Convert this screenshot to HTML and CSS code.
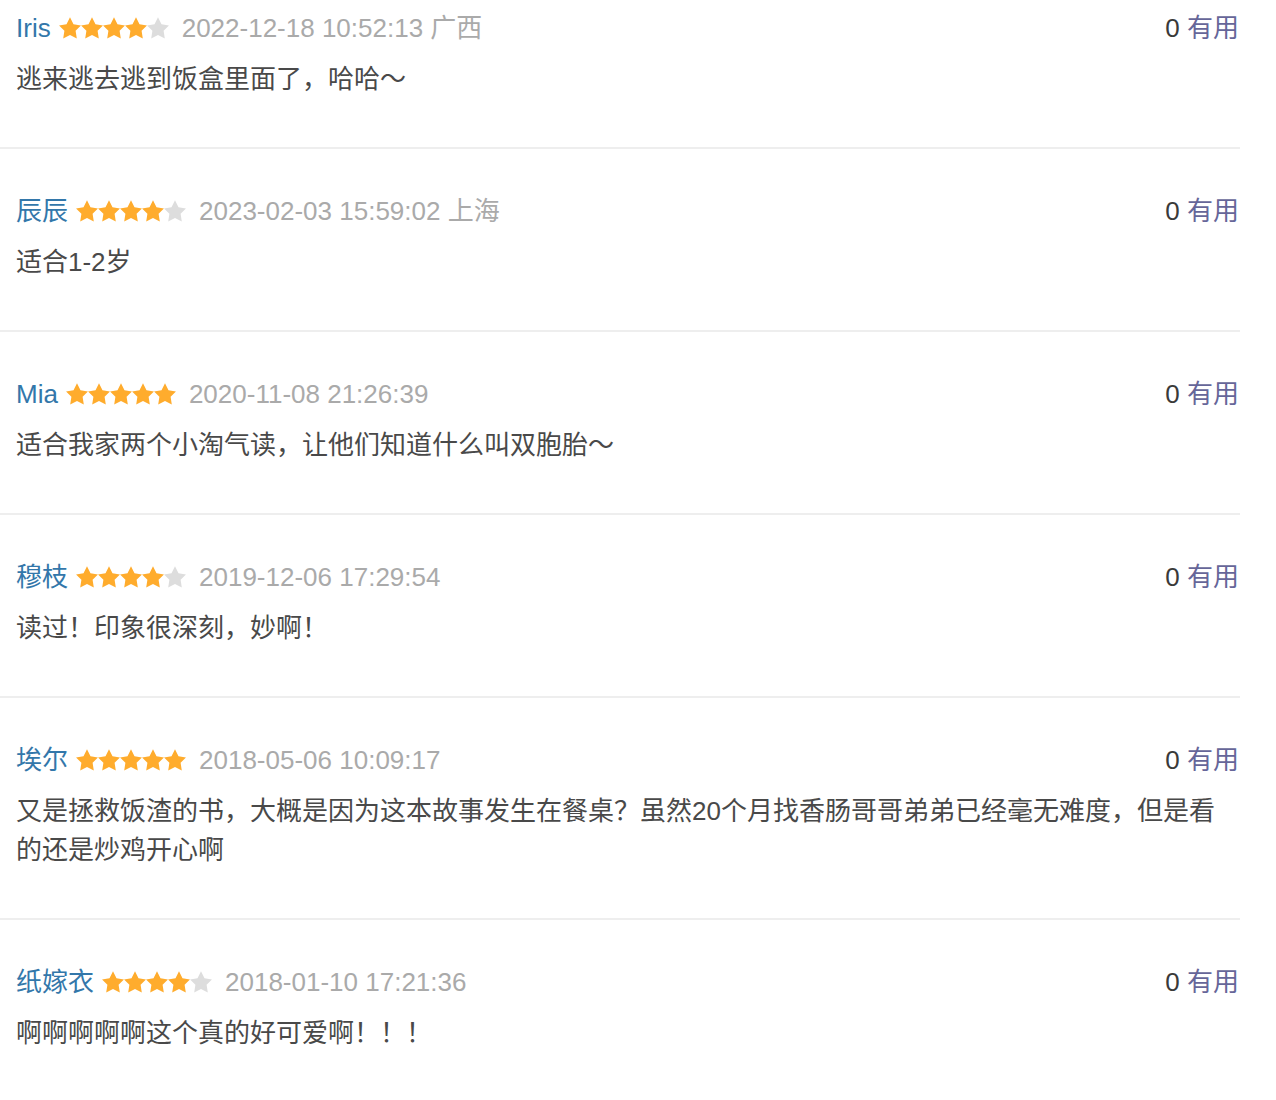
FILE: index.html
```html
<!DOCTYPE html>
<html lang="zh-CN">
<head>
<meta charset="utf-8">
<title>短评</title>
<link rel="stylesheet" href="styles.css">
</head>
<body>
<svg class="defs" width="0" height="0" aria-hidden="true">
  <defs>
    <polygon id="star" points="11,0.3 14.5,7.3 21.95,8.4 16.6,13.8 17.8,21.4 11,17.9 4.2,21.4 5.4,13.8 0.05,8.4 7.5,7.3"/>
  </defs>
</svg>
<ul class="comments">
  <li class="item">
    <div class="head">
      <div class="info">
        <a class="name" href="#">Iris</a>
        <svg class="stars" width="110" height="22" viewBox="0 0 110 22"><use href="#star" x="0" class="on"/><use href="#star" x="22" class="on"/><use href="#star" x="44" class="on"/><use href="#star" x="66" class="on"/><use href="#star" x="88" class="off"/></svg>
        <span class="time">2022-12-18 10:52:13 广西</span>
      </div>
      <div class="vote"><span class="count">0</span> <a class="useful" href="#">有用</a></div>
    </div>
    <p class="text">逃来逃去逃到饭盒里面了，哈哈～</p>
  </li>
  <li class="item">
    <div class="head">
      <div class="info">
        <a class="name" href="#">辰辰</a>
        <svg class="stars" width="110" height="22" viewBox="0 0 110 22"><use href="#star" x="0" class="on"/><use href="#star" x="22" class="on"/><use href="#star" x="44" class="on"/><use href="#star" x="66" class="on"/><use href="#star" x="88" class="off"/></svg>
        <span class="time">2023-02-03 15:59:02 上海</span>
      </div>
      <div class="vote"><span class="count">0</span> <a class="useful" href="#">有用</a></div>
    </div>
    <p class="text">适合1-2岁</p>
  </li>
  <li class="item">
    <div class="head">
      <div class="info">
        <a class="name" href="#">Mia</a>
        <svg class="stars" width="110" height="22" viewBox="0 0 110 22"><use href="#star" x="0" class="on"/><use href="#star" x="22" class="on"/><use href="#star" x="44" class="on"/><use href="#star" x="66" class="on"/><use href="#star" x="88" class="on"/></svg>
        <span class="time">2020-11-08 21:26:39</span>
      </div>
      <div class="vote"><span class="count">0</span> <a class="useful" href="#">有用</a></div>
    </div>
    <p class="text">适合我家两个小淘气读，让他们知道什么叫双胞胎～</p>
  </li>
  <li class="item">
    <div class="head">
      <div class="info">
        <a class="name" href="#">穆枝</a>
        <svg class="stars" width="110" height="22" viewBox="0 0 110 22"><use href="#star" x="0" class="on"/><use href="#star" x="22" class="on"/><use href="#star" x="44" class="on"/><use href="#star" x="66" class="on"/><use href="#star" x="88" class="off"/></svg>
        <span class="time">2019-12-06 17:29:54</span>
      </div>
      <div class="vote"><span class="count">0</span> <a class="useful" href="#">有用</a></div>
    </div>
    <p class="text">读过！印象很深刻，妙啊！</p>
  </li>
  <li class="item">
    <div class="head">
      <div class="info">
        <a class="name" href="#">埃尔</a>
        <svg class="stars" width="110" height="22" viewBox="0 0 110 22"><use href="#star" x="0" class="on"/><use href="#star" x="22" class="on"/><use href="#star" x="44" class="on"/><use href="#star" x="66" class="on"/><use href="#star" x="88" class="on"/></svg>
        <span class="time">2018-05-06 10:09:17</span>
      </div>
      <div class="vote"><span class="count">0</span> <a class="useful" href="#">有用</a></div>
    </div>
    <p class="text">又是拯救饭渣的书，大概是因为这本故事发生在餐桌？虽然20个月找香肠哥哥弟弟已经毫无难度，但是看的还是炒鸡开心啊</p>
  </li>
  <li class="item">
    <div class="head">
      <div class="info">
        <a class="name" href="#">纸嫁衣</a>
        <svg class="stars" width="110" height="22" viewBox="0 0 110 22"><use href="#star" x="0" class="on"/><use href="#star" x="22" class="on"/><use href="#star" x="44" class="on"/><use href="#star" x="66" class="on"/><use href="#star" x="88" class="off"/></svg>
        <span class="time">2018-01-10 17:21:36</span>
      </div>
      <div class="vote"><span class="count">0</span> <a class="useful" href="#">有用</a></div>
    </div>
    <p class="text">啊啊啊啊啊这个真的好可爱啊！！！</p>
  </li>
</ul>
</body>
</html>
```
FILE: styles.css
```css
html, body {
  margin: 0;
  padding: 0;
  background: #ffffff;
}

body {
  font-family: "Liberation Sans", "Noto Sans CJK SC", sans-serif;
  font-size: 26px;
  line-height: 39px;
  color: #494949;
}

.defs {
  position: absolute;
  width: 0;
  height: 0;
  overflow: hidden;
}

.comments {
  list-style: none;
  margin: 0;
  padding: 0;
  width: 1240px;
}

.item {
  padding: 43px 1px 48px 16px;
  border-bottom: 2px solid #eeeeee;
}

.item:first-child {
  padding-top: 9px;
}

.item:last-child {
  border-bottom: none;
}

.head {
  display: flex;
  justify-content: space-between;
  align-items: center;
  height: 39px;
}

.info {
  display: flex;
  align-items: center;
  white-space: nowrap;
}

.name {
  color: #3377aa;
  text-decoration: none;
}

.stars {
  display: block;
  margin: -2px 13px 0 8px;
}

.stars .on {
  fill: #ffac2d;
}

.stars .off {
  fill: #dddddd;
}

.time {
  color: #aaaaaa;
}

.vote {
  white-space: nowrap;
}

.count {
  color: #3a3a3a;
}

.useful {
  color: #666699;
  text-decoration: none;
}

.text {
  margin: 12px 0 0;
  color: #494949;
}
```
